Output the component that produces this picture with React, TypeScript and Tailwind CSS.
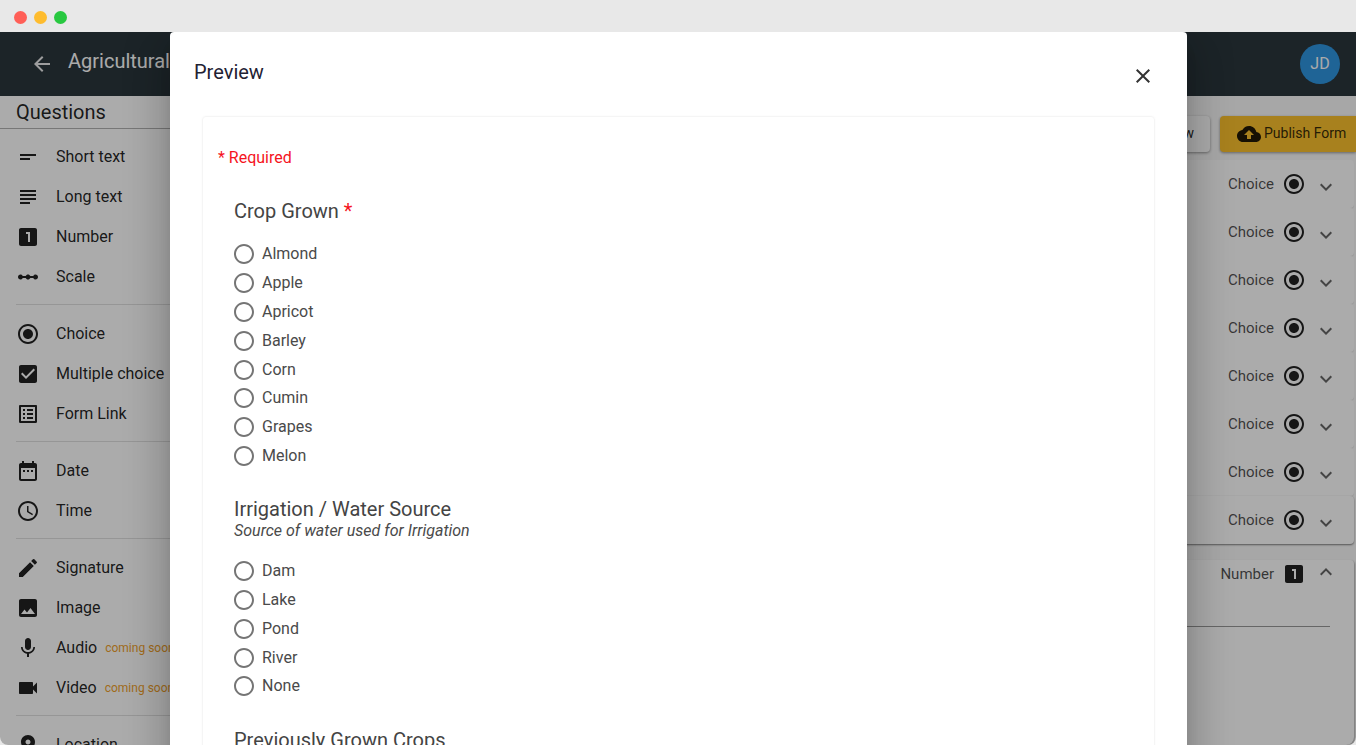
import React from "react";

const P: Record<string, string> = {
  short: "M4 9h16v2H4zm0 4h10v2H4z",
  long: "M14 17H4v2h10v-2zm6-8H4v2h16V9zM4 15h16v-2H4v2zM4 5v2h16V5H4z",
  one: "M19 3H5c-1.1 0-2 .9-2 2v14c0 1.1.9 2 2 2h14c1.1 0 2-.9 2-2V5c0-1.1-.9-2-2-2zm-5 14h-2V9h-2V7h4v10z",
  scale: "M19.5 9.5c-1.03 0-1.9.62-2.29 1.5h-2.92c-.39-.88-1.26-1.5-2.29-1.5s-1.9.62-2.29 1.5H6.79c-.39-.88-1.26-1.5-2.29-1.5C3.12 9.5 2 10.62 2 12s1.12 2.5 2.5 2.5c1.03 0 1.9-.62 2.29-1.5h2.92c.39.88 1.26 1.5 2.29 1.5s1.9-.62 2.29-1.5h2.92c.39.88 1.26 1.5 2.29 1.5 1.38 0 2.5-1.12 2.5-2.5s-1.12-2.5-2.5-2.5z",
  radio: "M12 7c-2.76 0-5 2.24-5 5s2.24 5 5 5 5-2.24 5-5-2.24-5-5-5zm0-5C6.48 2 2 6.48 2 12s4.48 10 10 10 10-4.48 10-10S17.52 2 12 2zm0 18c-4.42 0-8-3.58-8-8s3.58-8 8-8 8 3.58 8 8-3.58 8-8 8z",
  check: "M19 3H5c-1.11 0-2 .9-2 2v14c0 1.1.89 2 2 2h14c1.11 0 2-.9 2-2V5c0-1.1-.89-2-2-2zm-9 14l-5-5 1.41-1.41L10 14.17l7.59-7.59L19 8l-9 9z",
  list: "M19 5v14H5V5h14m1.1-2H3.9c-.5 0-.9.4-.9.9v16.2c0 .4.4.9.9.9h16.2c.4 0 .9-.5.9-.9V3.9c0-.5-.5-.9-.9-.9zM11 7h6v2h-6V7zm0 4h6v2h-6v-2zm0 4h6v2h-6zM7 7h2v2H7zm0 4h2v2H7zm0 4h2v2H7z",
  date: "M9 11H7v2h2v-2zm4 0h-2v2h2v-2zm4 0h-2v2h2v-2zm2-7h-1V2h-2v2H8V2H6v2H5c-1.11 0-1.99.9-1.99 2L3 20c0 1.1.89 2 2 2h14c1.1 0 2-.9 2-2V6c0-1.1-.9-2-2-2zm0 16H5V9h14v11z",
  time: "M11.99 2C6.47 2 2 6.48 2 12s4.47 10 9.99 10C17.52 22 22 17.52 22 12S17.52 2 11.99 2zM12 20c-4.42 0-8-3.58-8-8s3.58-8 8-8 8 3.58 8 8-3.58 8-8 8zM12.5 7H11v6l5.25 3.15.75-1.23-4.5-2.67z",
  edit: "M3 17.25V21h3.75L17.81 9.94l-3.75-3.75L3 17.25zM20.71 7.04c.39-.39.39-1.02 0-1.41l-2.34-2.34a.9959.9959 0 00-1.41 0l-1.83 1.83 3.75 3.75 1.83-1.83z",
  image: "M21 19V5c0-1.1-.9-2-2-2H5c-1.1 0-2 .9-2 2v14c0 1.1.9 2 2 2h14c1.1 0 2-.9 2-2zM8.5 13.5l2.5 3.01L14.5 12l4.5 6H5l3.5-4.5z",
  mic: "M12 14c1.66 0 2.99-1.34 2.99-3L15 5c0-1.66-1.34-3-3-3S9 3.34 9 5v6c0 1.66 1.34 3 3 3zm5.3-3c0 3-2.54 5.1-5.3 5.1S6.7 14 6.7 11H5c0 3.41 2.72 6.23 6 6.72V21h2v-3.28c3.28-.48 6-3.3 6-6.72h-1.7z",
  video: "M17 10.5V7c0-.55-.45-1-1-1H4c-.55 0-1 .45-1 1v10c0 .55.45 1 1 1h12c.55 0 1-.45 1-1v-3.5l4 4v-11l-4 4z",
  room: "M12 2C8.13 2 5 5.13 5 9c0 5.25 7 13 7 13s7-7.75 7-13c0-3.87-3.13-7-7-7zm0 9.5c-1.38 0-2.5-1.12-2.5-2.5s1.12-2.5 2.5-2.5 2.5 1.12 2.5 2.5-1.12 2.5-2.5 2.5z",
  cloud: "M19.35 10.04C18.67 6.59 15.64 4 12 4 9.11 4 6.6 5.64 5.35 8.04 2.34 8.36 0 10.91 0 14c0 3.31 2.69 6 6 6h13c2.76 0 5-2.24 5-5 0-2.64-2.05-4.78-4.65-4.96zM14 13v4h-4v-4H7l5-5 5 5h-3z",
  back: "M20 11H7.83l5.59-5.59L12 4l-8 8 8 8 1.41-1.41L7.83 13H20v-2z",
  close: "M19 6.41L17.59 5 12 10.59 6.41 5 5 6.41 10.59 12 5 17.59 6.41 19 12 13.41 17.59 19 19 17.59 13.41 12z",
  more: "M16.59 8.59L12 13.17 7.41 8.59 6 10l6 6 6-6z",
  less: "M12 8l-6 6 1.41 1.41L12 10.83l4.59 4.58L18 14z",
  off: "M12 2C6.48 2 2 6.48 2 12s4.48 10 10 10 10-4.48 10-10S17.52 2 12 2zm0 18c-4.42 0-8-3.58-8-8s3.58-8 8-8 8 3.58 8 8-3.58 8-8 8z",
};

function Icon({ n, className = "" }: { n: string; className?: string }) {
  return (
    <svg viewBox="0 0 24 24" fill="currentColor" className={"shrink-0 w-6 h-6 " + className}>
      <path d={P[n]} />
    </svg>
  );
}

function Row({ icon, label, soon }: { icon: string; label: string; soon?: boolean }) {
  return (
    <div className="h-10 pl-4 flex items-center text-black/[.87]">
      <Icon n={icon} />
      <span className="ml-4 text-base whitespace-nowrap">{label}</span>
      {soon && <span className="ml-2 text-xs text-[#ef9f2c] whitespace-nowrap">coming soon</span>}
    </div>
  );
}

function Divider() {
  return <div className="ml-4 mt-[7px] mb-[9px] h-px bg-black/[.12]" />;
}

function ChoiceCard({ last }: { last?: boolean }) {
  return (
    <div
      className={
        "h-12 shrink-0 bg-white rounded flex items-center justify-end pr-4 " +
        (last
          ? "shadow-[0_1px_2px_rgba(0,0,0,0.5)]"
          : "shadow-[0_1px_1px_rgba(0,0,0,0.1)]")
      }
    >
      <span className="text-[15px] text-black/70">Choice</span>
      <Icon n="radio" className="ml-2 text-black/[.87]" />
      <Icon n="more" className="ml-2 mt-[5px] text-black/60" />
    </div>
  );
}

function Radio({ label }: { label: string }) {
  return (
    <div className="h-[28.8px] flex items-center text-[#4a4a4a]">
      <Icon n="off" className="text-[#757575] -ml-0.5" />
      <span className="ml-1.5 text-base">{label}</span>
    </div>
  );
}

export default function App() {
  return (
    <div
      className="h-[745px] w-[1356px] overflow-hidden flex flex-col bg-[#e8e8e8]"
      style={{ fontFamily: "Roboto, 'Liberation Sans', sans-serif" }}
    >
      <div className="h-8 shrink-0 flex items-center pl-[13.5px] pt-[2px] gap-[7px]">
        <div className="w-[13px] h-[13px] rounded-full bg-[#ff5f57]" />
        <div className="w-[13px] h-[13px] rounded-full bg-[#febc2e]" />
        <div className="w-[13px] h-[13px] rounded-full bg-[#28c840]" />
      </div>
      <div className="relative flex-1 min-h-0 overflow-hidden rounded-b-lg bg-[#fafafa] flex flex-col">
        <div className="h-16 shrink-0 bg-[#2a363c] flex items-center text-white pl-[30px] pr-4">
          <Icon n="back" className="text-white/90" />
          <span className="ml-[14px] text-xl -mt-1.5">Agricultural Survey</span>
          <div className="ml-auto w-10 h-10 rounded-full bg-[#2f96e0] flex items-center justify-center text-base text-white">JD</div>
        </div>
        <div className="flex-1 min-h-0 flex">
          <div className="w-[260px] shrink-0 bg-white">
            <div className="h-[33px] pl-4 border-b border-black/30 text-xl text-black/[.87] leading-[33px]">Questions</div>
            <div className="pt-[8px]">
              <Row icon="short" label="Short text" />
              <Row icon="long" label="Long text" />
              <Row icon="one" label="Number" />
              <Row icon="scale" label="Scale" />
              <Divider />
              <Row icon="radio" label="Choice" />
              <Row icon="check" label="Multiple choice" />
              <Row icon="list" label="Form Link" />
              <Divider />
              <Row icon="date" label="Date" />
              <Row icon="time" label="Time" />
              <Divider />
              <Row icon="edit" label="Signature" />
              <Row icon="image" label="Image" />
              <Row icon="mic" label="Audio" soon />
              <Row icon="video" label="Video" soon />
              <Divider />
              <Row icon="room" label="Location" />
            </div>
          </div>
          <div className="flex-1 min-w-0 flex flex-col pr-[2px]">
            <div className="h-[64px] shrink-0 flex items-start justify-end gap-[10px] pt-5 -mr-[2px]">
              <div className="h-9 px-4 pb-[2px] bg-white rounded shadow-[0_1px_3px_rgba(0,0,0,0.4)] flex items-center text-sm text-black/[.87]">Preview</div>
              <div className="h-9 w-[136px] rounded-l bg-[#fbc02d] shadow-[0_1px_3px_rgba(0,0,0,0.4)] flex items-center pl-[17px] pb-[2px] text-sm text-black/[.8] whitespace-nowrap">
                <Icon n="cloud" className="mr-[3px] text-black/[.87] mt-[2px]" />
                Publish Form
              </div>
            </div>
            <ChoiceCard />
            <ChoiceCard />
            <ChoiceCard />
            <ChoiceCard />
            <ChoiceCard />
            <ChoiceCard />
            <ChoiceCard />
            <ChoiceCard last />
            <div className="mt-4 flex-1 bg-white rounded-b-lg rounded-t shadow-[1px_1px_2px_rgba(0,0,0,0.3)] pt-[2px] pr-4">
              <div className="h-6 flex justify-end items-center">
                <span className="text-[15px] text-black/70">Number</span>
                <Icon n="one" className="ml-2 text-black/[.87]" />
                <Icon n="less" className="ml-2 -mt-1 text-black/60" />
              </div>
              <div className="mt-[40px] mr-2 h-px bg-black/40" />
            </div>
          </div>
        </div>

        <div className="absolute inset-0 bg-black/[.33]" />

        <div className="absolute left-[170px] top-0 w-[1017px] h-[760px] bg-white rounded shadow-[0_11px_15px_-7px_rgba(0,0,0,0.2),0_24px_38px_3px_rgba(0,0,0,0.14),0_9px_46px_8px_rgba(0,0,0,0.12)]">
          <div className="h-[84px] pl-6 pr-[32.5px] flex items-start justify-between">
            <span className="mt-[26px] text-xl leading-7 text-[#1f2233]">Preview</span>
            <Icon n="close" className="mt-8 text-black/80" />
          </div>
          <div className="mx-8 h-[700px] rounded border border-[#f5f5f5] shadow-[0_0_2px_rgba(0,0,0,0.04)] pl-[15px] pt-[28.5px]">
            <div className="text-base leading-6 text-[#f5141e]">* Required</div>
            <div className="pl-4 pt-[29.5px]">
              <div className="text-xl leading-6 text-[#444]">
                Crop Grown <span className="text-[#f5141e]">*</span>
              </div>
              <div className="mt-[17px]">
                {["Almond", "Apple", "Apricot", "Barley", "Corn", "Cumin", "Grapes", "Melon"].map((l) => (
                  <Radio key={l} label={l} />
                ))}
              </div>
              <div className="mt-[27px] text-xl leading-6 text-[#444]">Irrigation / Water Source</div>
              <div className="text-base leading-[19px] italic text-[#4a4a4a]">Source of water used for Irrigation</div>
              <div className="mt-[16.4px]">
                {["Dam", "Lake", "Pond", "River", "None"].map((l) => (
                  <Radio key={l} label={l} />
                ))}
              </div>
              <div className="mt-[27.6px] text-xl leading-6 text-[#444]">Previously Grown Crops</div>
            </div>
          </div>
        </div>
      </div>
    </div>
  );
}
